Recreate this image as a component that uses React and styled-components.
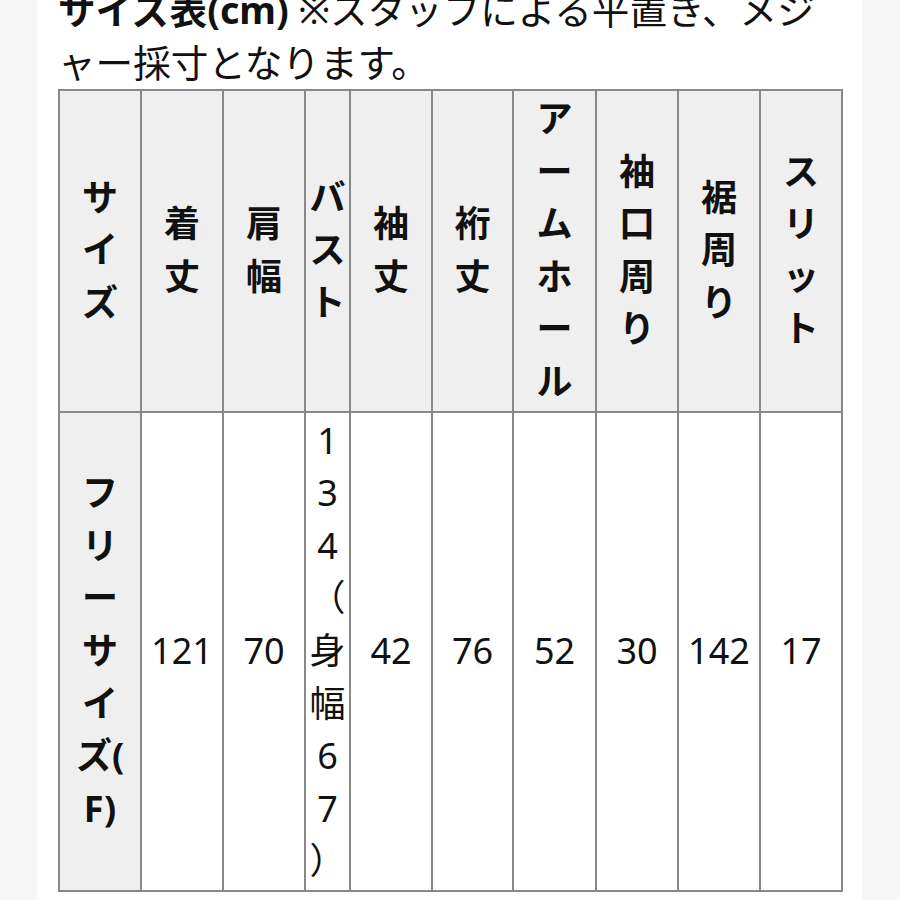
import React from "react";
import styled, { createGlobalStyle } from "styled-components";

const Global = createGlobalStyle`
  html, body { margin: 0; padding: 0; background: #f7f7f7; }
  body { font-family: "Noto Sans", "Noto Sans CJK JP", sans-serif; color: #111; overflow: hidden; }
`;

const Page = styled.div`
  width: 825px;
  margin: -16px 0 0 37px;
  background: #ffffff;
  min-height: 940px;
  padding: 0 21px;
  box-sizing: border-box;
`;

const Note = styled.p`
  margin: 0;
  font-size: 37.6px;
  line-height: 52.5px;
  width: 775px;
`;

const Strong = styled.b`
  font-weight: 700;
`;

const Table = styled.table`
  border-collapse: collapse;
  table-layout: fixed;
  width: 784px;
  font-size: 36px;
  line-height: 52.6px;
`;

const HeadCell = styled.th`
  background: #efefef;
  border: 2px solid #888888;
  padding: 2px 0;
  font-weight: 700;
  text-align: center;
  vertical-align: middle;
`;

const DataCell = styled.td`
  background: #ffffff;
  border: 2px solid #888888;
  padding: 2px 0;
  font-weight: 400;
  text-align: center;
  vertical-align: middle;
  white-space: nowrap;
`;

const Line = styled.span`
  display: block;
  white-space: nowrap;
`;

const Stacked = ({ lines }) => (
  <>
    {lines.map((l, i) => (
      <Line key={i}>{l}</Line>
    ))}
  </>
);

const widths = [82, 82, 82, 45, 82, 81, 83, 82, 82, 82];

const headers = [
  "サイズ",
  "着丈",
  "肩幅",
  "バスト",
  "袖丈",
  "裄丈",
  "アームホール",
  "袖口周り",
  "裾周り",
  "スリット",
];

const values = ["121", "70", "134（身幅67）", "42", "76", "52", "30", "142", "17"];

export default function App() {
  return (
    <>
      <Global />
      <Page>
        <Note>
          <Strong>サイズ表(cm)</Strong> ※スタッフによる平置き、メジャー採寸となります。
        </Note>
        <Table>
          <colgroup>
            {widths.map((w, i) => (
              <col key={i} style={{ width: w }} />
            ))}
          </colgroup>
          <thead>
            <tr>
              {headers.map((h) => (
                <HeadCell key={h}>
                  <Stacked lines={Array.from(h)} />
                </HeadCell>
              ))}
            </tr>
          </thead>
          <tbody>
            <tr>
              <HeadCell>
                <Stacked lines={["フ", "リ", "ー", "サ", "イ", "ズ(", "F)"]} />
              </HeadCell>
              {values.map((v, i) =>
                i === 2 ? (
                  <DataCell key={i}>
                    <Stacked lines={Array.from(v)} />
                  </DataCell>
                ) : (
                  <DataCell key={i}>{v}</DataCell>
                )
              )}
            </tr>
          </tbody>
        </Table>
      </Page>
    </>
  );
}
